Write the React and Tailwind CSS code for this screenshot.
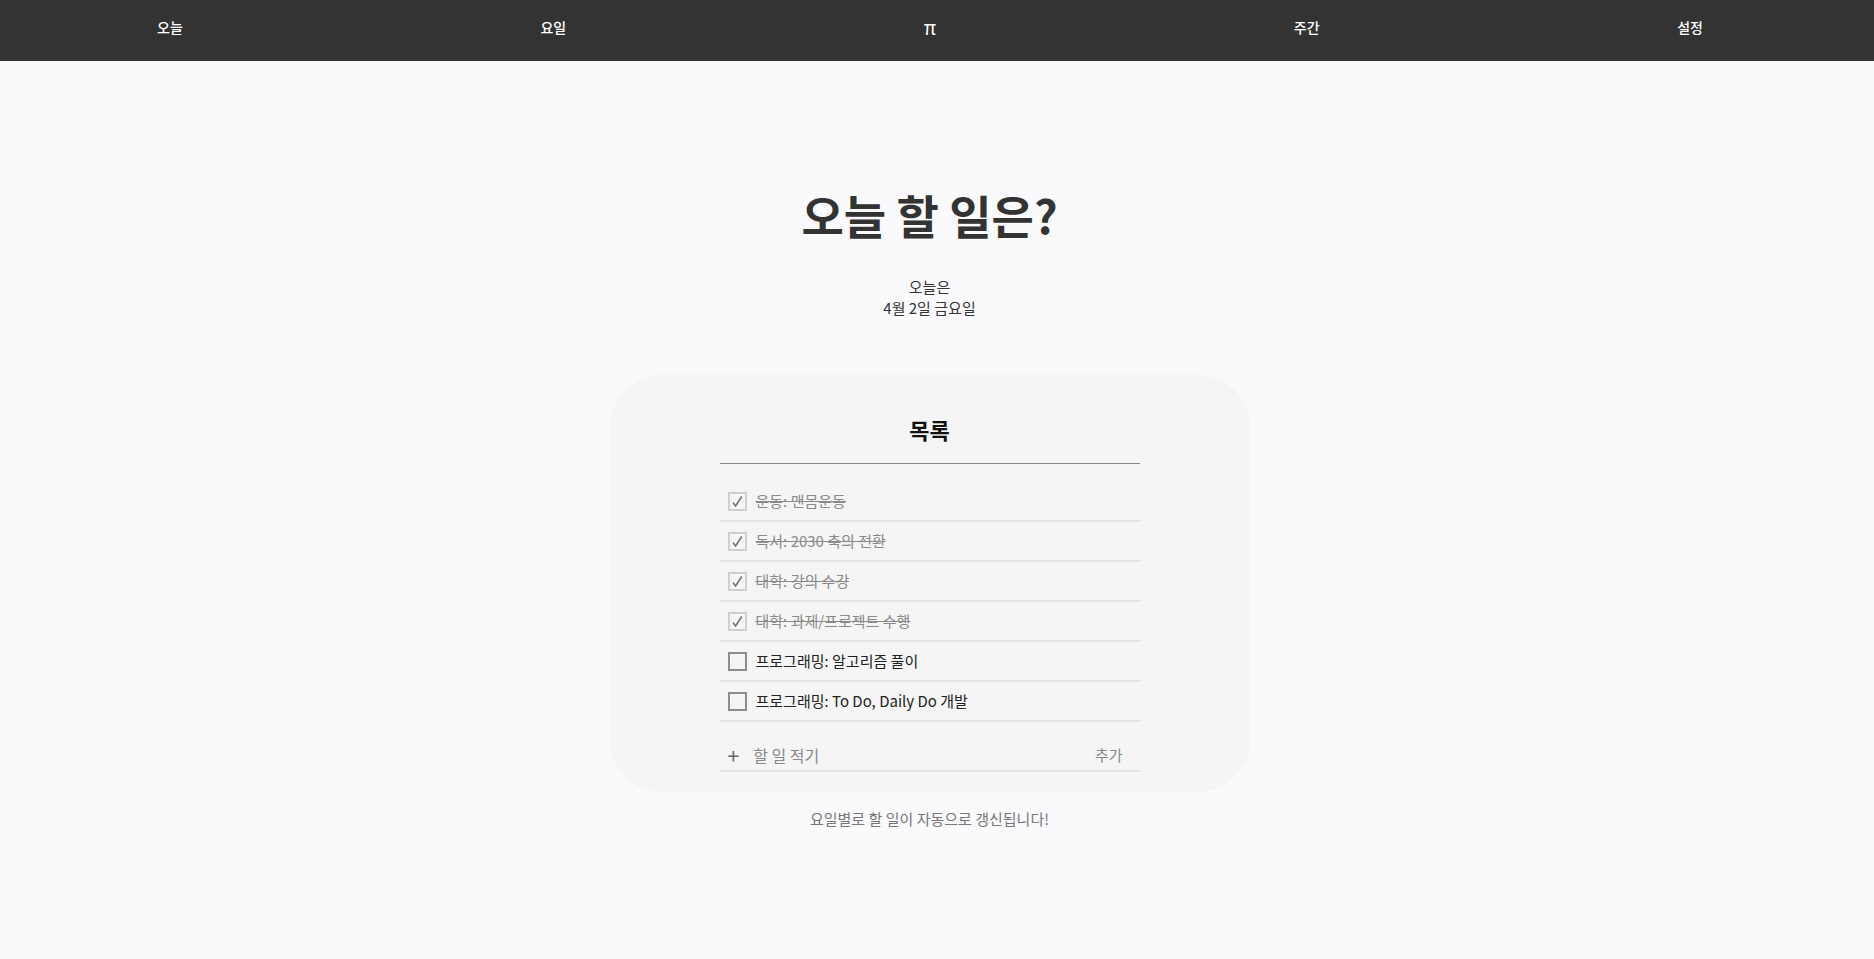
import React, { useState } from 'react';

const font = { fontFamily: '"Noto Sans CJK KR", "Noto Sans", sans-serif' };

const initialTodos = [
  { id: 1, text: '운동: 맨몸운동', done: true },
  { id: 2, text: '독서: 2030 축의 전환', done: true },
  { id: 3, text: '대학: 강의 수강', done: true },
  { id: 4, text: '대학: 과제/프로젝트 수행', done: true },
  { id: 5, text: '프로그래밍: 알고리즘 풀이', done: false },
  { id: 6, text: '프로그래밍: To Do, Daily Do 개발', done: false },
];

const Check = () => (
  <svg width="11" height="11" viewBox="0 0 11 11" fill="none">
    <path d="M1 6.5 L3.6 10 L9.8 0.5" stroke="#6f6f6f" strokeWidth="1.5" />
  </svg>
);

const TodoRow = ({ todo, onToggle }) => (
  <li className="flex items-center h-[40px] border-b-2 border-[#e3e3e3] pl-[8px]">
    <button
      onClick={() => onToggle(todo.id)}
      className={
        todo.done
          ? 'w-[19px] h-[19px] border-2 border-[#cfcfcf] flex items-center justify-center'
          : 'w-[19px] h-[19px] border-2 border-[#8c8c8c]'
      }
    >
      {todo.done && <Check />}
    </button>
    <span
      className={
        todo.done
          ? 'ml-[9px] text-[15px] text-[#8a8a8a] line-through'
          : 'ml-[9px] text-[15px] text-[#222]'
      }
    >
      {todo.text}
    </span>
  </li>
);

export default function App() {
  const [todos, setTodos] = useState(initialTodos);
  const [draft, setDraft] = useState('');

  const toggle = (id) =>
    setTodos(todos.map((t) => (t.id === id ? { ...t, done: !t.done } : t)));

  const add = () => {
    if (!draft.trim()) return;
    setTodos([...todos, { id: Date.now(), text: draft, done: false }]);
    setDraft('');
  };

  return (
    <div style={font} className="min-h-screen bg-[#fafafc] text-[#333]">
      {/* top nav */}
      <nav className="h-[61px] bg-[#333333] flex items-center justify-between pl-[157px] pr-[171px] pb-[6px] text-white text-[14px] font-medium">
        <a href="#">오늘</a>
        <a href="#">요일</a>
        <a href="#" className="text-[19px] font-normal">π</a>
        <a href="#">주간</a>
        <a href="#">설정</a>
      </nav>

      <main className="flex flex-col items-center pr-[15px]">
        <h1 className="mt-[126px] text-[46px] leading-[55px] font-bold text-[#333]">
          오늘 할 일은?
        </h1>
        <div className="mt-[34px] text-[15px] leading-[21px] text-[#333] text-center">
          <p>오늘은</p>
          <p>4월 2일 금요일</p>
        </div>

        <section className="mt-[57px] w-[640px] bg-[#f5f5f5] rounded-[52px] pt-[38px] pb-[20px] px-[110px]">
          <h2 className="text-center text-[22px] leading-[32px] font-bold text-[#111]">목록</h2>
          <div className="mt-[18px] h-px bg-[#888]" />
          <ul className="mt-[18px]">
            {todos.map((t) => (
              <TodoRow key={t.id} todo={t} onToggle={toggle} />
            ))}
          </ul>
          <div className="mt-[18px] h-[32px] border-b-2 border-[#e3e3e3] flex items-center pl-[8px] pr-[17px]">
            <span className="text-[21px] leading-none text-[#666]">+</span>
            <input
              value={draft}
              onChange={(e) => setDraft(e.target.value)}
              placeholder="할 일 적기"
              className="ml-[14px] flex-1 bg-transparent outline-none text-[16px] text-[#333] placeholder:text-[#888]"
            />
            <button onClick={add} className="text-[15px] text-[#888]">추가</button>
          </div>
        </section>

        <p className="mt-[16px] text-[15px] leading-[21px] text-[#777]">요일별로 할 일이 자동으로 갱신됩니다!</p>
      </main>
    </div>
  );
}
